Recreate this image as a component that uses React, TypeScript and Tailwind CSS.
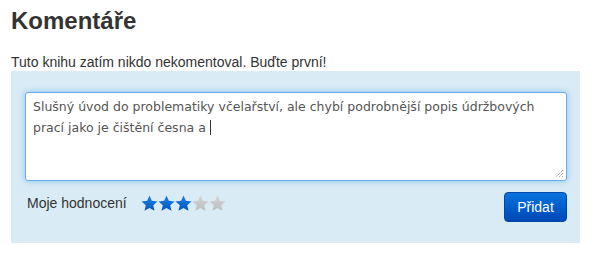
import React from "react";

const Star = ({ on }: { on: boolean }) => (
  <svg width="17" height="17" viewBox="0 0 24 24">
    <defs>
      <linearGradient id={on ? "sg-on" : "sg-off"} x1="0" y1="0" x2="0" y2="1">
        <stop offset="0" stopColor={on ? "#1b82e6" : "#d4d4d4"} />
        <stop offset="1" stopColor={on ? "#0055c0" : "#bdbdbd"} />
      </linearGradient>
    </defs>
    <path
      d="M12 0.8l3.3 7.4 8 .8-6.1 5.4 1.9 7.9L12 18.2l-7.1 4.1 1.9-7.9L.7 9l8-.8z"
      fill={on ? "url(#sg-on)" : "url(#sg-off)"}
    />
  </svg>
);

export default function App() {
  return (
    <div className="w-[595px] h-[259px] bg-white" style={{ fontFamily: '"Liberation Sans", Arial, sans-serif' }}>
      <div className="ml-[11px] w-[569px] pt-[6px]">
        <h2 className="text-[24px] leading-[29px] font-bold text-[#333]">Komentáře</h2>
        <p className="mt-[18px] text-[14px] leading-[18px] text-[#333]">Tuto knihu zatím nikdo nekomentoval. Buďte první!</p>
        <div className="bg-[#d9ebf5] pt-[21px] pl-[14px] pr-[13px] pb-[21px]">
          <div className="h-[89px] rounded-[3px] border border-[#68acec] bg-white shadow-[0_0_6px_rgba(82,168,236,0.6)] px-[7px] pt-[3px] relative">
            <p className="leading-[21px] text-[#555]" style={{ fontFamily: '"DejaVu Sans", sans-serif', fontSize: "12.5px" }}>
              Slušný úvod do problematiky včelařství, ale chybí podrobnější popis údržbových prací jako je čištění česna a <span className="inline-block w-[1px] h-[15px] bg-[#333] align-[-3px]" />
            </p>
            <svg width="9" height="9" viewBox="0 0 9 9" className="absolute right-[2px] bottom-[2px]">
              <path d="M8 1L1 8M8 4L4 8M8 7L7 8" stroke="#777" strokeWidth="1" strokeDasharray="1 1" />
            </svg>
          </div>
          <div className="flex items-start justify-between mt-[11px]">
            <div className="flex items-center mt-[2px]">
              <span className="text-[14px] leading-[18px] text-[#333] ml-[2px]">Moje hodnocení</span>
              <div className="flex ml-[14px]">
                <Star on />
                <Star on />
                <Star on />
                <Star on={false} />
                <Star on={false} />
              </div>
            </div>
            <button className="w-[63px] h-[30px] rounded-[4px] border border-[#0048a8] bg-gradient-to-b from-[#0a74de] to-[#0047b8] text-white text-[14px] leading-[16px]">
              Přidat
            </button>
          </div>
        </div>
      </div>
    </div>
  );
}
